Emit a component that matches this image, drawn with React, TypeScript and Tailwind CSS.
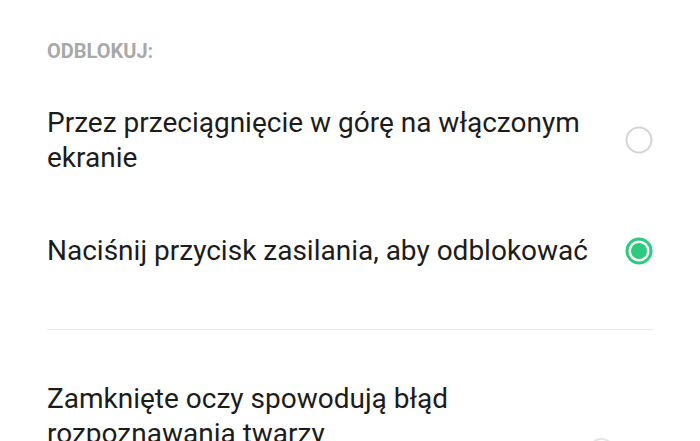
import React from 'react';

const OPTIONS = [
  { label: 'Przez przeciągnięcie w górę na włączonym ekranie', checked: false },
  { label: 'Naciśnij przycisk zasilania, aby odblokować', checked: true },
];

const Radio = ({ checked }: { checked: boolean }) =>
  checked ? (
    <svg width="28" height="28" viewBox="0 0 28 28" className="shrink-0">
      <circle cx="14" cy="14" r="13.5" fill="#2dcb7e" />
      <circle cx="14" cy="14" r="10.5" fill="#fff" />
      <circle cx="14" cy="14" r="8" fill="#2dcb7e" />
    </svg>
  ) : (
    <svg width="28" height="28" viewBox="0 0 28 28" className="shrink-0">
      <circle cx="14" cy="14" r="12.5" fill="none" stroke="#d4d4d4" strokeWidth="2" />
    </svg>
  );

const OptionRow = ({ label, checked }: { label: string; checked: boolean }) => (
  <div className="flex items-center justify-between py-[29px]">
    <span className="max-w-[545px] text-[28px] leading-[35px] text-[#1c1c1c]">{label}</span>
    <Radio checked={checked} />
  </div>
);

export default function App() {
  return (
    <div
      className="h-[441px] w-[700px] overflow-hidden bg-white px-[47px]"
      style={{ fontFamily: 'Roboto, "Noto Sans", sans-serif' }}
    >
      <div className="pt-[39px] pb-[13px] text-[20px] leading-[24px] font-bold text-[#a8a8a8]">
        ODBLOKUJ:
      </div>
      {OPTIONS.map((o) => (
        <OptionRow key={o.label} {...o} />
      ))}
      <div className="mt-[32px] h-px bg-[#ebebeb]" />
      <div className="flex items-start justify-between pt-[51px]">
        <span className="max-w-[480px] text-[28px] leading-[35px] text-[#1c1c1c]">
          Zamknięte oczy spowodują błąd rozpoznawania twarzy
        </span>
        {/* switch, off */}
        <div className="relative mt-[57px] h-[27px] w-[65px] shrink-0">
          <div className="absolute left-0 top-0 h-[27px] w-[27px] rounded-full border-2 border-[#e4e4e4] bg-white" />
        </div>
      </div>
    </div>
  );
}
